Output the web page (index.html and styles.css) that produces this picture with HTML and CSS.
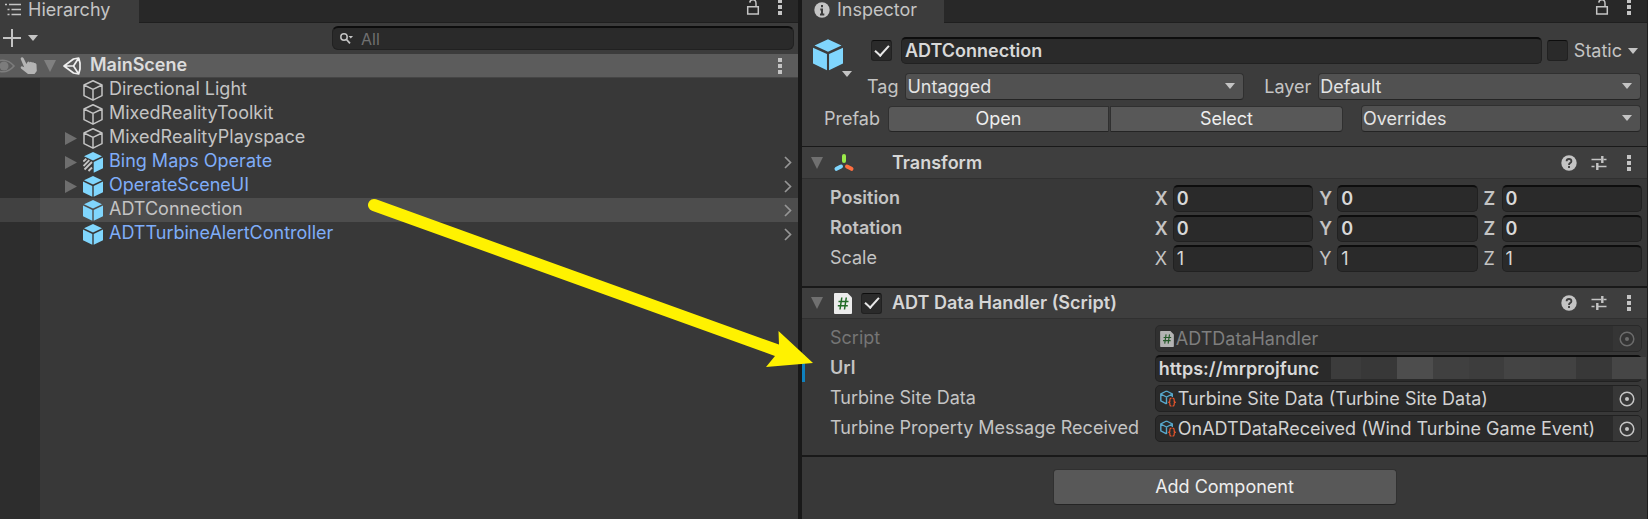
FILE: index.html
```html
<!DOCTYPE html>
<html lang="en">
<head>
<meta charset="utf-8">
<title>Editor</title>
<link rel="stylesheet" href="styles.css">
</head>
<body>
<svg class="defs" aria-hidden="true">
  <defs>
    <symbol id="i-lock" viewBox="0 0 14 18"><path d="M1.700 8.700h10.600v7.300h-10.600zM10 8.500V5.500Q10 1.800 7 1.800T3.800 4.600" fill="none" stroke="currentColor" stroke-width="1.500"/></symbol>
    <symbol id="i-dots" viewBox="0 0 4 16"><path d="M0 0h4v4h-4zM0 6h4v4h-4zM0 12h4v4h-4z" fill="currentColor"/></symbol>
    <symbol id="i-down" viewBox="0 0 10 6"><path d="M0 0h10L5 6z" fill="currentColor"/></symbol>
    <symbol id="i-fold" viewBox="0 0 12 12"><path d="M0 0h12L6 12z" fill="currentColor"/></symbol>
    <symbol id="i-unfold" viewBox="0 0 12 13"><path d="M0 0v13l12-6.500z" fill="currentColor"/></symbol>
    <symbol id="i-chev" viewBox="0 0 8 13"><path d="M1 1l5.500 5.500L1 12" fill="none" stroke="currentColor" stroke-width="1.700"/></symbol>
    <symbol id="i-cube" viewBox="0 0 20 21"><path d="M10 .8l9 4.200v10.600l-9 4.600-9-4.600V5zM1 5l9 4.400L19 5M10 9.400v10.600" fill="none" stroke="currentColor" stroke-width="1.500" stroke-linejoin="round"/></symbol>
    <symbol id="i-prefab" viewBox="0 0 20 21"><path d="M10 0l9 4.200-9 4.200-9-4.200zM0 5.600l9.300 4.300v10.800L0 16.200zM20 5.600l-9.300 4.300v10.800l9.300-4.500z" fill="#80d6fd"/></symbol>
    <symbol id="i-variant" viewBox="0 0 20 21"><path d="M10 0l9 4.200-9 4.200-9-4.200zM20 5.600l-9.300 4.300v10.800l9.300-4.500z" fill="#80d6fd"/><path d="M.3 9.500L3.300 6.800M.5 14l5.800-5.800M1.500 17.500L9 10M5.500 19l3.500-3.500" stroke="#c4c4c4" stroke-width="1.900"/></symbol>
    <symbol id="i-help" viewBox="0 0 16 16"><circle cx="8" cy="8" r="7.700" fill="#c4c4c4"/><path d="M5.600 6.300Q5.600 4 8 4t2.400 2.200Q10.400 7.300 9 8.100 8 8.700 8 9.900M8 11v1.900" fill="none" stroke="#3e3e3e" stroke-width="1.800"/></symbol>
    <symbol id="i-preset" viewBox="0 0 15 16"><path d="M0 4.500h9.500M12 4.500h3M0 11.500h3M6 11.500h9" stroke="currentColor" stroke-width="1.400"/><path d="M10.800 1v7M5.800 8v7" stroke="currentColor" stroke-width="2.400"/></symbol>
    <symbol id="i-script" viewBox="0 0 18 21"><path d="M1 0h12.500L18 4.500V20q0 1-1 1H1q-1 0-1-1V1q0-1 1-1z" fill="#ececec"/><path d="M7.800 4.500L6 16.500M12.300 4.500l-1.800 12M4.500 8.500h10M3.800 12.700h10" stroke="#226b28" stroke-width="1.500"/></symbol>
    <symbol id="i-asset" viewBox="0 0 16 17"><path d="M6.500 1l5.800 3v3M6.500 1L.8 4v6.800l5.700 3M.8 4l5.700 3 5.800-3M6.500 7v7" fill="none" stroke="#58a8cc" stroke-width="1.400"/><path d="M11.500 8.200q-1.700 0-1.700 1.700v1.500l-1.100.8 1.100.8v1.500q0 1.700 1.700 1.700M12.500 8.200q1.700 0 1.700 1.700v1.500l1.100.8-1.100.8v1.500q0 1.700-1.700 1.700" fill="none" stroke="#e8552b" stroke-width="1.200"/></symbol>
    <symbol id="i-target" viewBox="0 0 16 16"><circle cx="8" cy="8" r="6.800" fill="none" stroke="currentColor" stroke-width="1.500"/><circle cx="8" cy="8" r="2" fill="currentColor"/></symbol>
  </defs>
</svg>

<main class="editor">
  <section class="panel hierarchy" aria-label="Hierarchy">
    <header class="tabs">
      <h1 class="tab tab-hierarchy"><svg class="ico-list" viewBox="0 0 16 14"><path d="M0 1.500h2M4 1.500h12M2.500 6.500h2M6.500 6.500H16M2.500 11.500h2M6.500 11.500H16" stroke="currentColor" stroke-width="1.600"/></svg>Hierarchy</h1>
      <div class="tab-tools"><button class="plain" aria-label="Lock"><svg class="ico-lock"><use href="#i-lock"/></svg></button><button class="plain" aria-label="Menu"><svg class="ico-dots"><use href="#i-dots"/></svg></button></div>
    </header>
    <div class="toolbar">
      <button class="plain add" aria-label="Create"><svg class="ico-plus" viewBox="0 0 18 18"><path d="M9 0v18M0 9h18" stroke="currentColor" stroke-width="2"/></svg><svg class="ico-down"><use href="#i-down"/></svg></button>
      <label class="search"><svg class="ico-search" viewBox="0 0 13 11"><circle cx="4" cy="4" r="3.200" fill="none" stroke="currentColor" stroke-width="1.500"/><path d="M6 6l4 4.300" stroke="currentColor" stroke-width="1.800"/><path d="M8.500 3H13l-2.200 2.500z" fill="currentColor"/></svg><input type="search" placeholder="All" aria-label="Search"></label>
    </div>
    <div class="tree">
      <div class="scene">
        <svg class="ico-eye" viewBox="0 0 15 14"><path d="M0 1.500Q8 0 14 7 8 14 0 12.500" fill="none" stroke="#7c7c7c" stroke-width="1.600"/><circle cx="4" cy="7" r="4.500" fill="#7c7c7c"/></svg>
        <svg class="ico-hand" viewBox="0 0 18 18"><path d="M1.200.5q1.500-.8 2.400.8L6.500 7l1-2q1.500-1 2.200.4 1.200-1.200 2.300.2 1.300-.9 2.200.4 2-.4 2.300 1.600l.3 6.400-2.300 3H8L1 11.500Q0 9.500 2 9.300l2.200.9L.8 2.300Q.4 1 1.200.5z" fill="#b4b4b4"/></svg>
        <svg class="ico-fold"><use href="#i-fold"/></svg>
        <svg class="ico-unity" viewBox="0 0 18 18"><path d="M1 9L10.500 2l5.200-1 1.300 5v6l-1.300 5-5.200-1zM1 9h9.500M15.700 1L10.500 9l5.200 8" fill="none" stroke="#f0f0f0" stroke-width="1.700" stroke-linejoin="round"/></svg>
        <strong class="scene-name">MainScene</strong>
        <button class="plain" aria-label="Scene menu"><svg class="ico-dots"><use href="#i-dots"/></svg></button>
      </div>
      <ul class="items">
        <li class="item"><span class="twist"></span><svg class="ico-cube"><use href="#i-cube"/></svg><span class="name">Directional Light</span></li>
        <li class="item"><span class="twist"></span><svg class="ico-cube"><use href="#i-cube"/></svg><span class="name">MixedRealityToolkit</span></li>
        <li class="item"><span class="twist"><svg class="ico-unfold"><use href="#i-unfold"/></svg></span><svg class="ico-cube"><use href="#i-cube"/></svg><span class="name">MixedRealityPlayspace</span></li>
        <li class="item prefab"><span class="twist"><svg class="ico-unfold"><use href="#i-unfold"/></svg></span><svg class="ico-cube"><use href="#i-variant"/></svg><span class="name">Bing Maps Operate</span><svg class="ico-chev"><use href="#i-chev"/></svg></li>
        <li class="item prefab"><span class="twist"><svg class="ico-unfold"><use href="#i-unfold"/></svg></span><svg class="ico-cube"><use href="#i-prefab"/></svg><span class="name">OperateSceneUI</span><svg class="ico-chev"><use href="#i-chev"/></svg></li>
        <li class="item selected"><span class="twist"></span><svg class="ico-cube"><use href="#i-prefab"/></svg><span class="name">ADTConnection</span><svg class="ico-chev"><use href="#i-chev"/></svg></li>
        <li class="item prefab"><span class="twist"></span><svg class="ico-cube"><use href="#i-prefab"/></svg><span class="name">ADTTurbineAlertController</span><svg class="ico-chev"><use href="#i-chev"/></svg></li>
      </ul>
    </div>
  </section>

  <section class="panel inspector" aria-label="Inspector">
    <header class="tabs">
      <h1 class="tab tab-inspector"><svg class="ico-info" viewBox="0 0 16 16"><circle cx="8" cy="8" r="7.700" fill="#c4c4c4"/><path d="M6.300 7.500H8v5M6 12.500h4.300M8 3v2.200" fill="none" stroke="#3c3c3c" stroke-width="2"/></svg>Inspector</h1>
      <div class="tab-tools"><button class="plain" aria-label="Lock"><svg class="ico-lock"><use href="#i-lock"/></svg></button><button class="plain" aria-label="Menu"><svg class="ico-dots"><use href="#i-dots"/></svg></button></div>
    </header>

    <div class="object">
      <div class="object-icon"><svg class="ico-big"><use href="#i-prefab"/></svg><svg class="ico-down"><use href="#i-down"/></svg></div>
      <div class="row-name">
        <input type="checkbox" class="check" checked aria-label="Active">
        <input type="text" class="field bold" value="ADTConnection" aria-label="Name">
        <label class="static"><input type="checkbox" class="check">Static</label>
        <svg class="ico-down"><use href="#i-down"/></svg>
      </div>
      <div class="row-tag">
        <label for="tag">Tag</label>
        <span class="drop"><select id="tag"><option>Untagged</option></select><svg class="ico-down"><use href="#i-down"/></svg></span>
        <label for="layer">Layer</label>
        <span class="drop"><select id="layer"><option>Default</option></select><svg class="ico-down"><use href="#i-down"/></svg></span>
      </div>
      <div class="row-prefab">
        <span class="prefab-label">Prefab</span>
        <span class="pair"><button class="btn">Open</button><button class="btn">Select</button></span>
        <span class="drop"><select aria-label="Overrides"><option>Overrides</option></select><svg class="ico-down"><use href="#i-down"/></svg></span>
      </div>
    </div>

    <section class="component first">
      <header class="comp-head">
        <svg class="ico-fold"><use href="#i-fold"/></svg>
        <svg class="ico-axes" viewBox="0 0 20 20"><g fill="none" stroke-width="4" stroke-linecap="round"><path d="M10 3v5" stroke="#9bea4a"/><path d="M7 13.500l-4.500 2.300" stroke="#80d6fd"/><path d="M13 13.500l4.500 2.300" stroke="#ff6e40"/></g></svg>
        <span class="slot"></span>
        <h2 class="comp-title">Transform</h2>
        <button class="plain" aria-label="Help"><svg class="ico-16"><use href="#i-help"/></svg></button>
        <button class="plain" aria-label="Presets"><svg class="ico-16"><use href="#i-preset"/></svg></button>
        <button class="plain menu" aria-label="Menu"><svg class="ico-dots"><use href="#i-dots"/></svg></button>
      </header>
      <div class="props">
        <div class="prop bold"><span>Position</span><div class="vec"><label>X<input class="field" value="0"></label><label>Y<input class="field" value="0"></label><label>Z<input class="field" value="0"></label></div></div>
        <div class="prop bold"><span>Rotation</span><div class="vec"><label>X<input class="field" value="0"></label><label>Y<input class="field" value="0"></label><label>Z<input class="field" value="0"></label></div></div>
        <div class="prop"><span>Scale</span><div class="vec"><label>X<input class="field" value="1"></label><label>Y<input class="field" value="1"></label><label>Z<input class="field" value="1"></label></div></div>
      </div>
    </section>

    <section class="component second">
      <header class="comp-head">
        <svg class="ico-fold"><use href="#i-fold"/></svg>
        <svg class="ico-script"><use href="#i-script"/></svg>
        <span class="slot"><input type="checkbox" class="check" checked aria-label="Enabled"></span>
        <h2 class="comp-title">ADT Data Handler (Script)</h2>
        <button class="plain" aria-label="Help"><svg class="ico-16"><use href="#i-help"/></svg></button>
        <button class="plain" aria-label="Presets"><svg class="ico-16"><use href="#i-preset"/></svg></button>
        <button class="plain menu" aria-label="Menu"><svg class="ico-dots"><use href="#i-dots"/></svg></button>
      </header>
      <div class="props">
        <div class="prop disabled"><span>Script</span><div class="ref"><svg class="ico-doc"><use href="#i-script"/></svg><span class="ref-name">ADTDataHandler</span><button class="pick" aria-label="Pick script" disabled><svg class="ico-16"><use href="#i-target"/></svg></button></div></div>
        <div class="prop bold changed"><label for="url">Url</label><div class="url"><input id="url" class="field" value="https://mrprojfunc"><div class="mask"><i class="m1"></i><i class="m2"></i><i class="m3"></i><i class="m4"></i><i class="m5"></i><i class="m6"></i><i class="m7"></i><i class="m2"></i><i class="m8"></i></div></div></div>
        <div class="prop"><span>Turbine Site Data</span><div class="ref"><svg class="ico-asset"><use href="#i-asset"/></svg><span class="ref-name">Turbine Site Data (Turbine Site Data)</span><button class="pick" aria-label="Pick site data"><svg class="ico-16"><use href="#i-target"/></svg></button></div></div>
        <div class="prop"><span>Turbine Property Message Received</span><div class="ref"><svg class="ico-asset"><use href="#i-asset"/></svg><span class="ref-name">OnADTDataReceived (Wind Turbine Game Event)</span><button class="pick" aria-label="Pick event"><svg class="ico-16"><use href="#i-target"/></svg></button></div></div>
      </div>
    </section>

    <footer class="foot"><button class="btn add-component">Add Component</button></footer>

    <svg class="arrow" viewBox="0 0 450 180" aria-hidden="true"><path d="M11 12L416 158" stroke="#fff200" stroke-width="12" stroke-linecap="round"/><path d="M450 170L403 174 412 163 416 152 415.500 138z" fill="#fff200"/></svg>
  </section>
</main>
</body>
</html>
```

FILE: styles.css
```css
* { box-sizing: border-box; }
body { margin: 0; background: #383838; color: #c4c4c4; font: 18px/24px Inter, "Liberation Sans", sans-serif; }
input, select, button { font: inherit; color: inherit; margin: 0; }
svg { display: block; flex: none; overflow: visible; }
.defs { position: absolute; width: 0; height: 0; }
h1, h2 { margin: 0; font-size: 18px; }

.editor { display: grid; grid-template-columns: minmax(0, 798fr) minmax(0, 849fr); min-height: 100vh; border-right: 1px solid #1f1f1f; }
.panel { display: flex; flex-direction: column; min-width: 0; }
.inspector { position: relative; border-left: 4px solid #191919; }

.tabs { display: flex; justify-content: space-between; height: 23px; background: #282828; border-bottom: 1px solid #1f1f1f; }
.tab { display: flex; align-items: center; height: 23px; padding-bottom: 4px; background: #3c3c3c; font-weight: 400; }
.tab-hierarchy { gap: 7px; padding-left: 5px; width: 139px; }
.tab-inspector { gap: 7px; padding-left: 12px; width: 142px; }
.tab-tools { display: flex; gap: 18px; padding: 0 16px 8px 0; align-items: center; }
.plain { display: flex; align-items: center; padding: 0; border: 0; background: none; }

.toolbar { display: flex; align-items: center; justify-content: space-between; height: 31px; padding: 0 4px 1px 3px; background: #3c3c3c; }
.add { gap: 7px; }
.search { display: flex; align-items: center; gap: 8px; flex: 0 0 462px; height: 24px; padding: 0 7px; background: #2a2a2a; border: 1px solid #212121; border-top: 2px solid #0d0d0d; border-radius: 6px; }
.search input { flex: 1; min-width: 0; padding: 0; border: 0; background: none; outline: 0; font-size: 16px; }
.search input::placeholder { color: #707070; }

.tree { flex: 1; background: linear-gradient(to right, #2d2d2d 40px, #383838 40px); }
.scene { display: flex; align-items: center; height: 24px; padding-right: 16px; background: #5c5c5c; border-bottom: 1px solid #454545; }
.ico-hand { margin-left: 5px; }
.scene .ico-fold { margin: 0 7px 0 6px; color: #808080; }
.scene-name { flex: 1; margin-left: 9px; padding-bottom: 2px; font-weight: 600; color: #dcdcdc; }
.items { margin: 0; padding: 0; list-style: none; }
.item { display: flex; align-items: center; height: 24px; padding: 0 6px 0 65px; }
.twist { width: 18px; color: #6e6e6e; }
.name { flex: 1; margin-left: 6px; padding-bottom: 2px; }
.prefab .name { color: #7fadf8; }
.selected { background: linear-gradient(to right, #414141 40px, #4d4d4d 40px); }
.ico-chev { color: #969696; }

.object { display: grid; grid-template-columns: 56px minmax(0, 1fr); padding: 14px 6px 14px 11px; background: #3c3c3c; border-bottom: 1px solid #191919; }
.object-icon { width: 40px; height: 27px; padding-top: 2px; }
.object-icon .ico-down { margin-left: 29px; }
.row-name { display: flex; align-items: center; height: 27px; margin-left: 2px; padding-right: 3px; }
.row-name .field { flex: 1; margin: 0 5px 0 9px; }
.static { display: flex; align-items: center; gap: 6px; margin-right: 6px; }
.row-tag { grid-column: 1 / -1; display: grid; grid-template-columns: auto minmax(0, 338fr) auto minmax(0, 322fr); gap: 7px; margin-top: 9px; padding-left: 54px; align-items: center; }
.row-tag label:nth-of-type(2) { margin-left: 13px; }
.row-prefab { grid-column: 1 / -1; display: grid; grid-template-columns: auto minmax(0, 455fr) minmax(0, 290fr); gap: 8px; margin-top: 5px; padding-left: 11px; align-items: center; }
.row-prefab .drop { margin-left: 10px; }
.row-prefab select { height: 26px; }
.pair { display: grid; grid-template-columns: 221fr 233fr; gap: 1px; }
.pair .btn:first-child { border-radius: 4px 0 0 4px; }
.pair .btn:last-child { border-radius: 0 4px 4px 0; }
.btn { height: 26px; padding: 0; background: #585858; border: 1px solid #303030; border-bottom-color: #242424; border-radius: 4px; color: #eee; }
.drop { position: relative; display: block; }
.drop select { display: block; width: 100%; height: 27px; padding: 0 1px; appearance: none; background: #515151; border: 1px solid #303030; border-bottom-color: #242424; border-radius: 4px; color: #e4e4e4; }
.drop .ico-down { position: absolute; right: 9px; top: 10px; pointer-events: none; }

.check { appearance: none; flex: none; width: 21px; height: 21px; background: #2a2a2a; border: 1px solid #212121; border-top-color: #0d0d0d; border-radius: 3px; display: grid; place-items: center; }
.check:checked::before { content: ""; width: 12px; height: 6px; margin-bottom: 4px; border: solid #e8e8e8; border-width: 0 0 2px 2px; transform: rotate(-48deg); }
.field { display: block; width: 100%; min-width: 0; height: 27px; padding: 0 3px 1px; background: #2a2a2a; border: 1px solid #212121; border-top: 2px solid #0d0d0d; border-radius: 5px; color: #d8d8d8; outline: 0; }
.bold { font-weight: 600; }

.component { border-bottom: 2px solid #191919; padding-bottom: 13px; }
.first { padding-bottom: 14px; }
.comp-head { display: flex; align-items: center; height: 32px; padding: 0 16px 0 9px; background: #3e3e3e; border-bottom: 1px solid #303030; color: #c4c4c4; }
.second .comp-head { height: 31px; }
.comp-head .ico-fold { margin-right: 11px; color: #707070; }
.ico-script { margin-right: 2px; }
.slot { width: 38px; padding-left: 7px; }
.comp-title { flex: 1; font-weight: 600; color: #d6d6d6; }
.comp-head .plain { margin-left: 14px; }
.comp-head .menu { margin-left: 20px; }
.props { display: grid; gap: 3px; padding: 6px 5px 0 28px; }
.prop { display: grid; grid-template-columns: minmax(0, 2fr) minmax(0, 3fr); align-items: center; white-space: nowrap; }
.prop > span, .prop > label { padding-bottom: 2px; }
.vec { display: grid; grid-template-columns: repeat(3, minmax(0, 1fr)); gap: 6px; }
.vec label { display: grid; grid-template-columns: 18px minmax(0, 1fr); align-items: center; }
.ref { display: flex; align-items: center; gap: 2px; height: 27px; padding-left: 4px; background: #2a2a2a; border: 1px solid #212121; border-radius: 5px; color: #d2d2d2; overflow: hidden; }
.ref-name { flex: 1; min-width: 0; }
.pick { display: grid; place-items: center; width: 28px; height: 25px; padding: 0; border: 0; background: #373737; color: #c4c4c4; }
.disabled { color: #757575; }
.disabled .ref { background: #303030; border-color: #292929; color: #7e7e7e; }
.disabled .pick { background: #353535; color: #848484; }
.disabled svg { opacity: 0.7; }
.changed { margin-left: -28px; padding-left: 25px; border-left: 3px solid #0f81be; }
.url { position: relative; }
.mask { position: absolute; top: 2px; right: -4px; width: 315px; height: 22px; display: grid; grid-template-columns: 30fr repeat(7, 36fr) 34fr; }
.m1 { background: #3c3c3c; } .m2 { background: #383838; } .m3 { background: #4d4d4d; } .m4 { background: #404040; }
.m5 { background: #3d3d3d; } .m6 { background: #444; } .m7 { background: #424242; } .m8 { background: #464646; }
.foot { display: flex; justify-content: center; padding-top: 12px; }
.add-component { width: 344px; height: 36px; }

.arrow { position: absolute; left: -439px; top: 193px; width: 450px; height: 180px; z-index: 1; }

.ico-list { width: 16px; height: 14px; }
.ico-lock { width: 14px; height: 18px; }
.ico-dots { width: 4px; height: 16px; }
.ico-plus { width: 18px; height: 18px; }
.ico-down { width: 10px; height: 6px; }
.ico-search { width: 13px; height: 11px; }
.ico-eye { width: 15px; height: 14px; }
.ico-hand { width: 18px; height: 18px; }
.ico-fold { width: 12px; height: 12px; }
.ico-unfold { width: 12px; height: 13px; }
.ico-unity { width: 18px; height: 18px; }
.ico-cube { width: 20px; height: 21px; }
.ico-chev { width: 8px; height: 13px; }
.ico-info, .ico-16 { width: 16px; height: 16px; }
.ico-big { width: 30px; height: 32px; }
.ico-axes { width: 20px; height: 20px; }
.ico-script { width: 18px; height: 21px; }
.ico-doc { width: 14px; height: 16px; }
.ico-asset { width: 16px; height: 17px; }
```
